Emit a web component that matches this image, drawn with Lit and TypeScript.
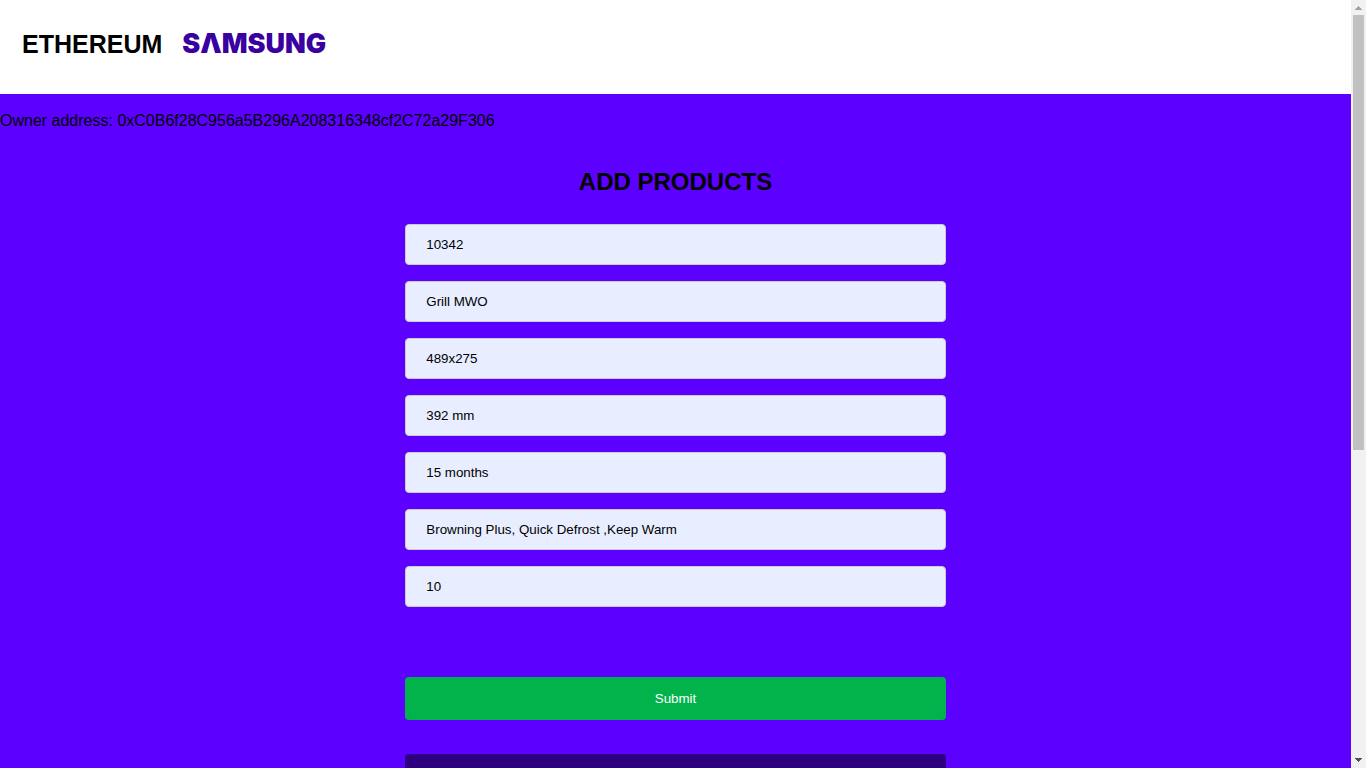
import { LitElement, html, css, svg } from "lit";
import { customElement, state } from "lit/decorators.js";

interface Field {
  name: string;
  label: string;
  value: string;
}

@customElement("app-scrollbar")
export class AppScrollbar extends LitElement {
  static styles = css`
    :host {
      display: grid;
      grid-template-rows: 15px 1fr 15px;
      background: #f1f1f1;
    }
    .arrow {
      display: block;
      width: 15px;
      height: 15px;
    }
    .thumb {
      height: 59%;
      margin: 0 2px;
      background: #c1c1c1;
    }
  `;

  render() {
    return html`
      <svg class="arrow" viewBox="0 0 15 15" shape-rendering="crispEdges" aria-hidden="true">
        ${svg`<path fill="#a3a3a3" d="M7 6h1v1h1v1h1v1h1v1H4V9h1V8h1V7h1z" />`}
      </svg>
      <div class="track"><div class="thumb"></div></div>
      <svg class="arrow" viewBox="0 0 15 15" shape-rendering="crispEdges" aria-hidden="true">
        ${svg`<path fill="#505050" d="M4 5h7v1h-1v1H9v1H8v1H7V8H6V7H5V6H4z" />`}
      </svg>
    `;
  }
}

@customElement("app-root")
export class AppRoot extends LitElement {
  static styles = css`
    :host {
      display: grid;
      grid-template-columns: 1fr 15px;
      height: 100vh;
      overflow: hidden;
      font-family: "Liberation Sans", Arial, sans-serif;
      font-size: 16px;
      color: #000;
    }
    .page {
      overflow-y: auto;
      scrollbar-width: none;
      background: #5c00ff;
    }
    .header {
      display: flex;
      align-items: center;
      gap: 20px;
      padding: 28px 22px 34px;
      background: #fff;
    }
    .brand {
      font-size: 25px;
      line-height: 32px;
      font-weight: 700;
      color: #000;
      text-decoration: none;
    }
    .logo {
      font-family: Inter, "Liberation Sans", sans-serif;
      font-size: 27px;
      line-height: 32px;
      font-weight: 900;
      color: #3a00a0;
    }
    .owner {
      margin: 0;
      padding: 18px 0 16px;
      line-height: 18px;
    }
    .title {
      margin: 0;
      padding: 22px 0 20px;
      font-size: 24px;
      line-height: 28px;
      text-align: center;
    }
    .form {
      display: flex;
      flex-direction: column;
      width: 40%;
      margin: 0 auto;
      padding: 8px 0 40px;
    }
    .fields {
      display: grid;
      gap: 16px;
      margin-bottom: 70px;
    }
    .field {
      display: block;
      box-sizing: border-box;
      width: 100%;
      height: 41px;
      padding: 12px 20px;
      border: 1px solid #ccc;
      border-radius: 4px;
      background: #e8eeff;
      color: #000;
      font-family: inherit;
    }
    .submit {
      height: 43px;
      border: none;
      border-radius: 4px;
      background: #02b34c;
      color: #fff;
      font-family: inherit;
      cursor: pointer;
    }
    .panel {
      height: 420px;
      margin-top: 34px;
      border-radius: 4px;
      background: #2c0080;
    }
  `;

  @state() private fields: Field[] = [
    { name: "id", label: "Product ID", value: "10342" },
    { name: "name", label: "Product name", value: "Grill MWO" },
    { name: "size", label: "Size", value: "489x275" },
    { name: "depth", label: "Depth", value: "392 mm" },
    { name: "warranty", label: "Warranty", value: "15 months" },
    { name: "features", label: "Features", value: "Browning Plus, Quick Defrost ,Keep Warm" },
    { name: "quantity", label: "Quantity", value: "10" },
  ];

  private onSubmit(event: Event) {
    event.preventDefault();
  }

  render() {
    return html`
      <div class="page">
        <header class="header">
          <a class="brand" href="#">ETHEREUM</a>
          <span class="logo" role="img" aria-label="Samsung">SΛMSUNG</span>
        </header>
        <main>
          <p class="owner">Owner address: 0xC0B6f28C956a5B296A208316348cf2C72a29F306</p>
          <h2 class="title">ADD PRODUCTS</h2>
          <form class="form" @submit=${this.onSubmit}>
            <div class="fields">
              ${this.fields.map(
                (field) => html`
                  <input class="field" type="text" name=${field.name} aria-label=${field.label} .value=${field.value} />
                `,
              )}
            </div>
            <button class="submit" type="submit">Submit</button>
            <div class="panel"></div>
          </form>
        </main>
      </div>
      <app-scrollbar></app-scrollbar>
    `;
  }
}
